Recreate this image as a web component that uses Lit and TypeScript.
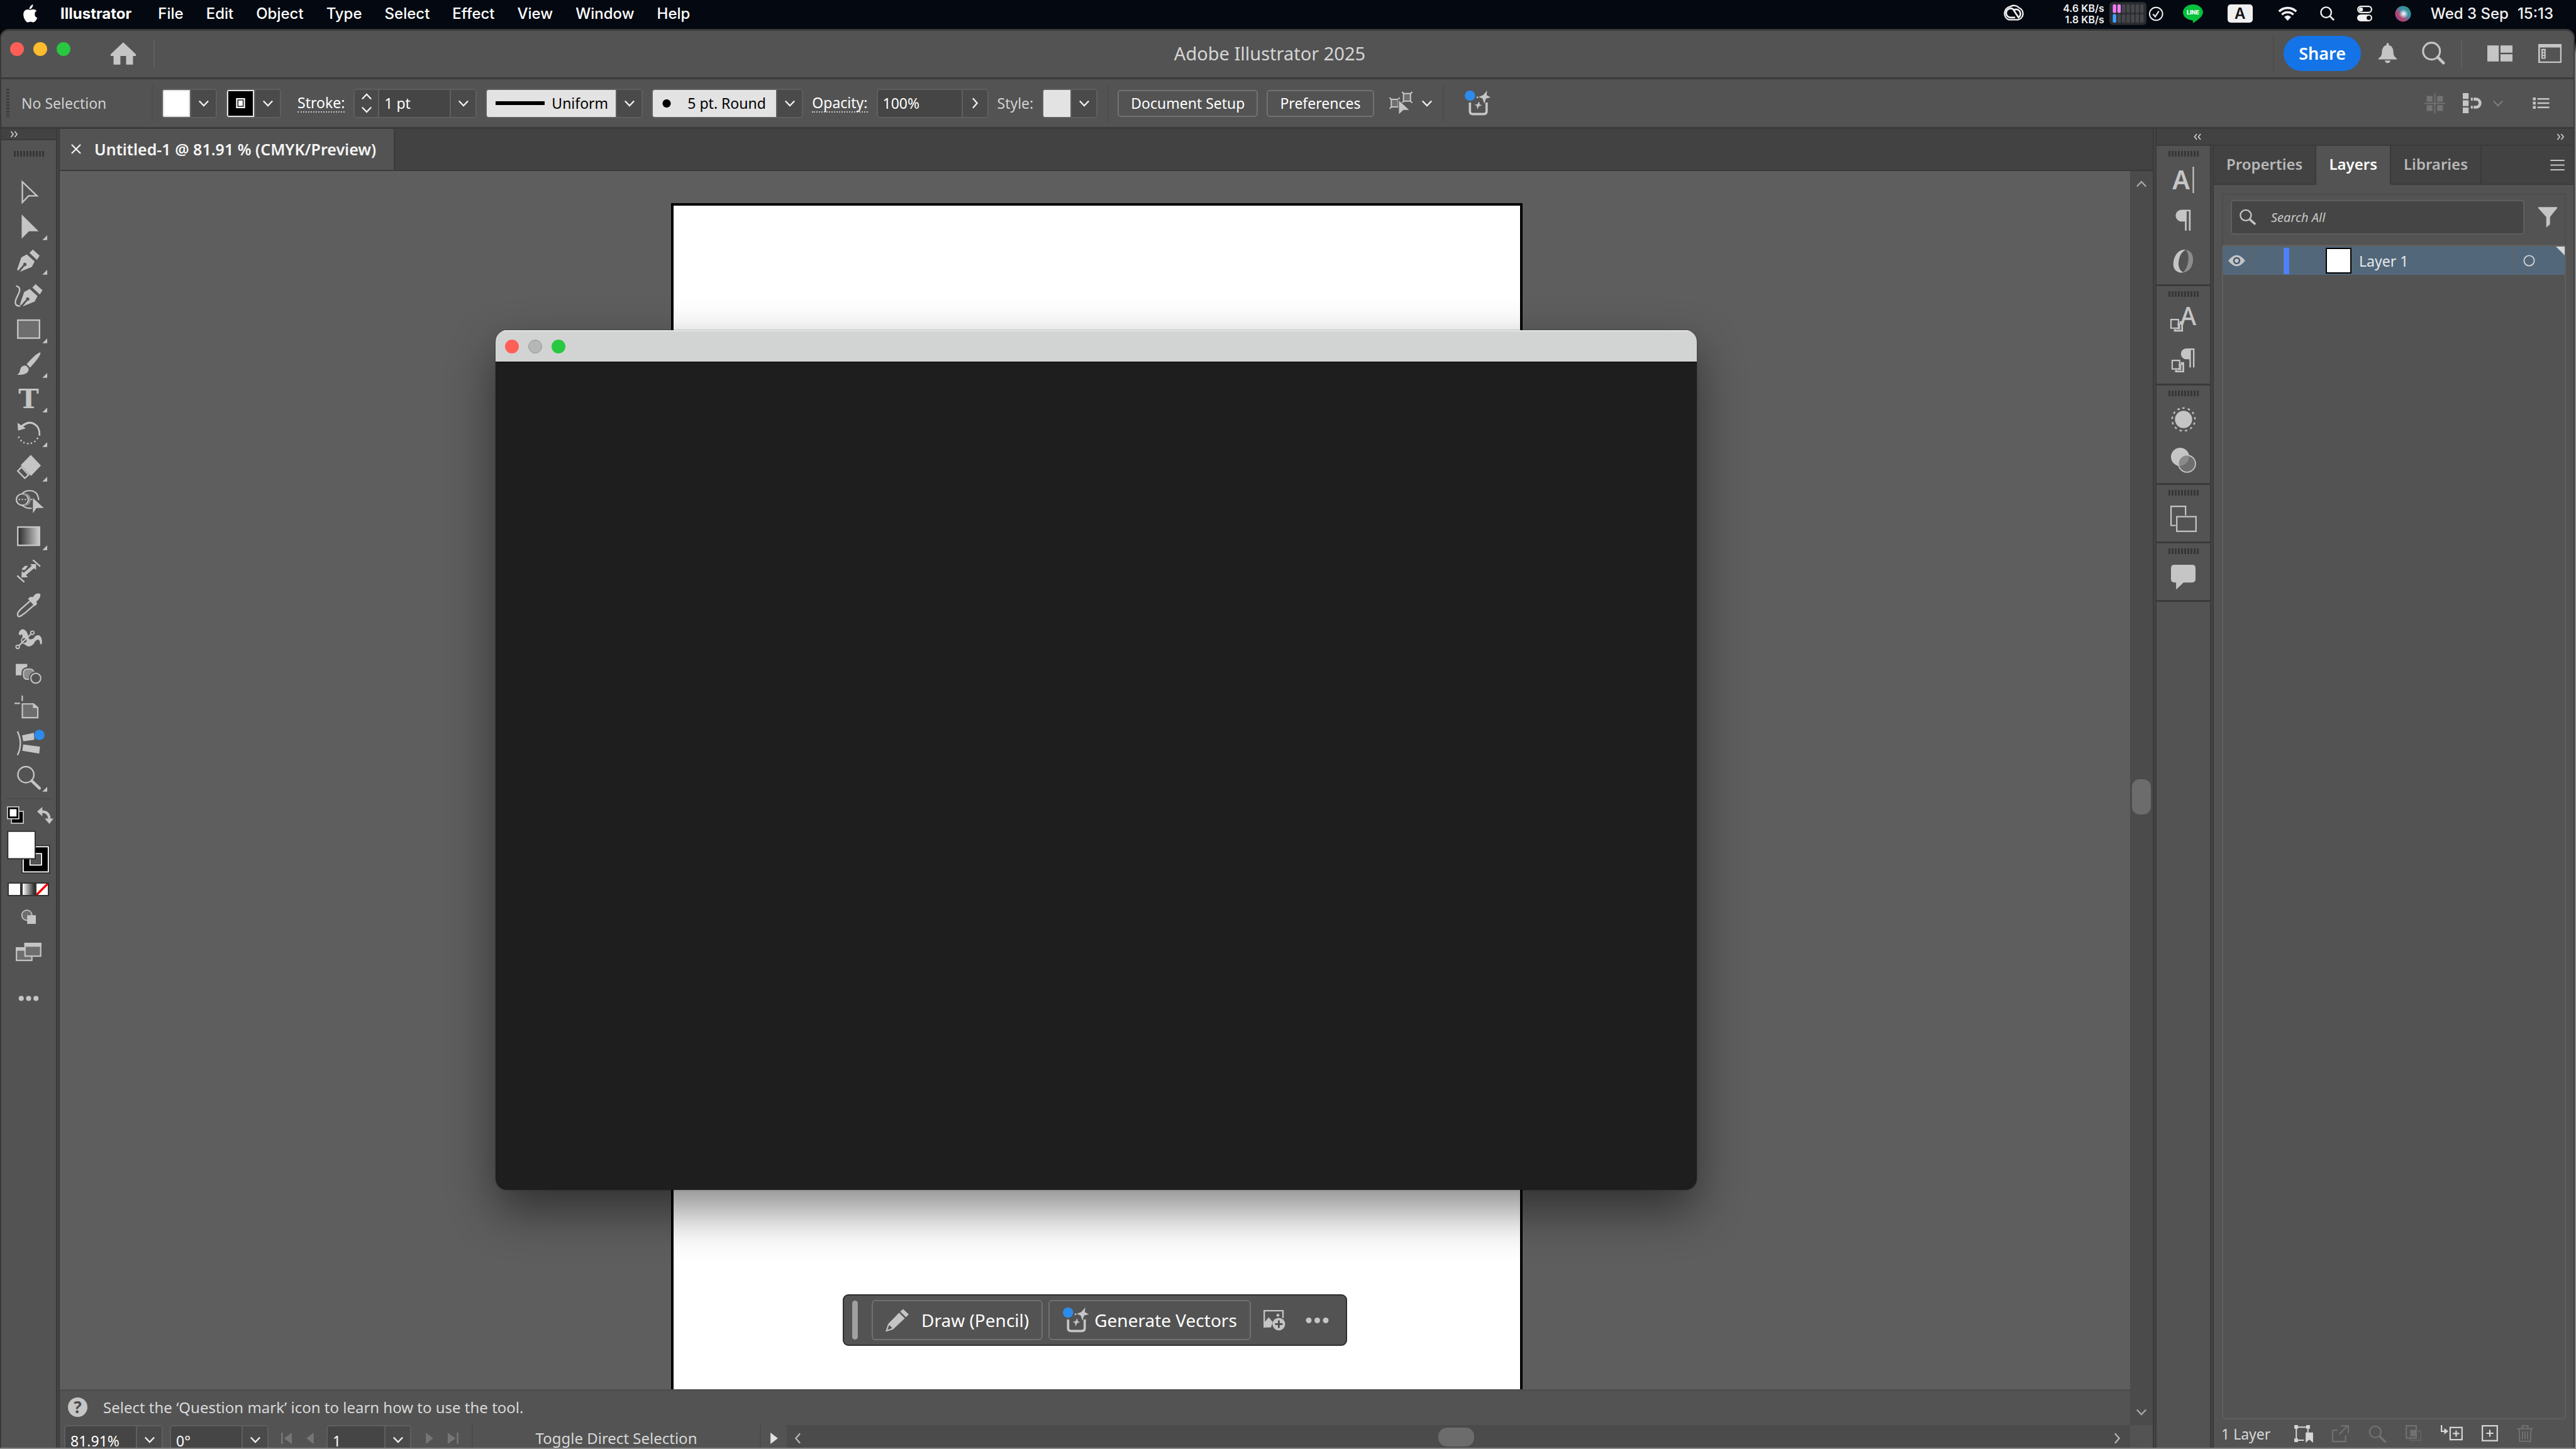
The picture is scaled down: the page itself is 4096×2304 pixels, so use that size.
import { LitElement, html, svg, css, TemplateResult, SVGTemplateResult } from "lit";
import { customElement, state } from "lit/decorators.js";
import { classMap } from "lit/directives/class-map.js";

/* Icons are drawn on a 35-unit grid that maps to 32 CSS pixels. */
const art = (x: number, y: number, w: number, h: number, body: SVGTemplateResult): TemplateResult => html`
  <svg class="art" viewBox="${x} ${y} ${w} ${h}" width=${Math.round((w * 32) / 35)} height=${Math.round((h * 32) / 35)} aria-hidden="true">${body}</svg>`;

const down = (color = "#f0f0f0") => art(0, 0, 20, 14, svg`<path d="M2 2.500 10 11 18 2.500" fill="none" stroke=${color} stroke-width="2.600"/>`);
const up = (color = "#f0f0f0") => art(0, 0, 20, 14, svg`<path d="M2 11.500 10 3 18 11.500" fill="none" stroke=${color} stroke-width="2.600"/>`);
const right = (color = "#f0f0f0") => art(0, 0, 12, 20, svg`<path d="M2 1.500 9.500 10 2 18.500" fill="none" stroke=${color} stroke-width="2.600"/>`);
const left = (color = "#f0f0f0") => art(0, 0, 12, 20, svg`<path d="M10 1.500 2.500 10 10 18.500" fill="none" stroke=${color} stroke-width="2.600"/>`);
const twinRight = art(0, 0, 14, 12, svg`<path d="M1.500 1 5.500 6 1.500 11M8 1 12 6 8 11" fill="none" stroke="#d0d0d0" stroke-width="1.800"/>`);
const twinLeft = art(0, 0, 14, 12, svg`<path d="M5.500 1 1.500 6 5.500 11M12 1 8 6 12 11" fill="none" stroke="#d0d0d0" stroke-width="1.800"/>`);

const nib = svg`
  <path d="M31.700 3.800 43.700 14.600 39 22.200 26 10z"/>
  <path d="M4.300 39 11.700 17.600 21.300 12.500 35 24.800 30 34.500 9 43 17 33a3 3 0 1 0-2-2L6 41z"/>`;

const generate = art(0, 0, 50, 46, svg`
  <path d="M10 22v15q0 5 5 5h19q5 0 5-5V22" fill="none" stroke="#c5c5c5" stroke-width="4"/>
  <path d="M40 1 39 9 46 13 38 15 35 24 32 15 25 12 33 9z" fill="#c5c5c5"/>
  <path d="M26 20 27 25 31 27 26 28 23 34 22 28 18 26 23 25z" fill="#c5c5c5"/>
  <circle cx="23" cy="13" r="1.600" fill="#c5c5c5"/>
  <circle cx="10" cy="10" r="9" fill="#2d8ceb"/>`);

interface Tool { name: string; more: boolean; body: SVGTemplateResult; }

const tools: Tool[] = [
  { name: "Selection", more: false, body: svg`<path d="M13.500 6.500 39 31H24.500L13.500 42.500z" fill="none" stroke="#c5c5c5" stroke-width="2.600"/>` },
  { name: "Direct Selection", more: true, body: svg`<path d="M12.300 3 42 32.500H25L12.300 45.400z"/>` },
  { name: "Pen", more: true, body: nib },
  { name: "Curvature", more: false, body: svg`<g transform="translate(5 0)">${nib}</g><path d="M2.500 7C14 10 7 20 3 29-1 38 2 43 10 42" fill="none" stroke="#c5c5c5" stroke-width="2.600"/>` },
  { name: "Rectangle", more: true, body: svg`<rect x="5.500" y="7.500" width="38" height="31.500" fill="#6e6e6e" stroke="#c5c5c5" stroke-width="2.600"/>` },
  { name: "Paintbrush", more: true, body: svg`<path d="M43 4q3-1 2 2Q42 14 27 30L21 24Q36 7 43 4z"/><path d="M19 26.500q6 3 5.500 8Q22 44 4.300 42.500 9 40 9.500 34q2-8 9.500-7.500z"/>` },
  { name: "Type", more: true, body: svg`<text x="24.500" y="41" text-anchor="middle" font-family="DejaVu Serif, serif" font-size="48" font-weight="700">T</text>` },
  { name: "Rotate", more: true, body: svg`<path d="M5 5.600 6 19.400 19.500 15.300 15 12.500Q25 4 34 9.500 43 15 42 28h3Q46 12 35 6 24 0 11.500 10z"/>${[[7.300, 31], [11.300, 36.800], [16.300, 40.300], [23, 42], [29.300, 41.300], [35.300, 38.300], [40, 33]].map(([x, y]) => svg`<circle cx=${x} cy=${y} r="1.500"/>`)}` },
  { name: "Eraser", more: true, body: svg`<path d="M28.300 1.300 46 20 28.700 38 10.700 19z"/><path d="M5.500 29.500 12 22.500 24.500 36 17.700 42z" fill="none" stroke="#c5c5c5" stroke-width="2.600"/>` },
  { name: "Shape Builder", more: false, body: svg`<path d="M13 10Q18 4 27 4.500 41 5 42 21M13 30Q20 36 30 35" fill="none" stroke="#c5c5c5" stroke-width="2.400"/><ellipse cx="13.500" cy="20" rx="10.500" ry="10" fill="none" stroke="#c5c5c5" stroke-width="2.400"/><path d="M17 10a10 10 0 0 1 0 20" fill="none" stroke="#8c8c8c" stroke-width="3"/><path d="M7 20H31" stroke="#c5c5c5" stroke-width="2.200" stroke-dasharray="2.500 2.800"/><path d="M32 17 51 34.800H38.300L32 44z"/>` },
  { name: "Gradient", more: true, body: svg`<defs><linearGradient id="ramp"><stop offset="0" stop-color="#2a2a2a"/><stop offset="1" stop-color="#cfcfcf"/></linearGradient></defs><rect x="5.500" y="7.500" width="38" height="32" fill="url(#ramp)" stroke="#c5c5c5" stroke-width="2.600"/>` },
  { name: "Dimension", more: false, body: svg`<path d="M4.500 32 17 43.500M32 4.500 44.700 16" stroke="#c5c5c5" stroke-width="2.600"/><path d="M12 35 12.500 24 16 27 30 15 27 12H37.500V22L34 19 20 31 23 35z"/><path d="M13 20 18 15h5.500L18 22h-5z"/>` },
  { name: "Eyedropper", more: false, body: svg`<path d="M23.300 12 28 8.300 31 9.500 37 3.500Q42 1.500 45 4 46 8 43 12L38 17 39.300 21 35 25z"/><path d="M27 16 11 30Q9 32 6 36 4 41 7 43 11 43 13.500 40L18 37 34 23" fill="none" stroke="#c5c5c5" stroke-width="2.600"/>` },
  { name: "Puppet Warp", more: false, body: svg`<path d="M7 14Q9 5 16 6 23 9 24 20 25 26 33 22 37 15 43 16.500 49 20 47.500 32H44.500Q45 25 41 24 37 24 33 32 25 40 17 32 11 24 14 18 12 12 10 17z"/><path d="M6 36 30 13" stroke="#c5c5c5" stroke-width="2.400"/><circle cx="17" cy="25.500" r="5" fill="#535353" stroke="#c5c5c5" stroke-width="2"/><path d="M12 30 24 19" stroke="#c5c5c5" stroke-width="2.400"/><circle cx="5.300" cy="36.700" r="3" fill="#535353" stroke="#c5c5c5" stroke-width="2"/><circle cx="31" cy="12" r="3" fill="#535353" stroke="#c5c5c5" stroke-width="2"/>` },
  { name: "Blend", more: false, body: svg`<rect x="2" y="6" width="20" height="20"/><rect x="14.500" y="14" width="20" height="20" rx="7" fill="#8c8c8c" stroke="#535353" stroke-width="5"/><rect x="15.500" y="15" width="18" height="18" rx="6" fill="#8c8c8c" stroke="#c5c5c5" stroke-width="2"/><circle cx="37" cy="31" r="9" fill="#535353" stroke="#535353" stroke-width="6"/><circle cx="37" cy="31" r="8.700" fill="#535353" stroke="#c5c5c5" stroke-width="2.200"/>` },
  { name: "Artboard", more: false, body: svg`<path d="M-.3 14.600H9.300M13.300 1V10.400" stroke="#c5c5c5" stroke-width="2.400"/><path d="M13.500 15.500H33L40.500 22V39.500H13.500z" fill="#6e6e6e" stroke="#c5c5c5" stroke-width="2.400"/><path d="M32 14V22.500H41z"/>` },
  { name: "Objects on Path", more: false, body: svg`<path d="M5 3Q15 24 5 44.500" fill="none" stroke="#c5c5c5" stroke-width="2.600"/><path d="M13 10 33.500 5.700 34.500 17.700 15 20.300zM15 26 44.300 29.800 43 41.800 13.300 37z"/><circle cx="43.300" cy="9.300" r="9" fill="#2d8ceb"/>` },
  { name: "Zoom", more: true, body: svg`<circle cx="19.700" cy="18.200" r="14" fill="none" stroke="#c5c5c5" stroke-width="2.600"/><path d="M30 29 43.500 42" stroke="#c5c5c5" stroke-width="5" stroke-linecap="round"/>` },
];

const pilcrow = svg`<path d="M12 0H28V37H25V3H21V37H18V21H12A10.500 10.500 0 0 1 12 0z"/>`;
const linkedSquares = svg`<path d="M1 1H14V16H1z" fill="none" stroke="#c5c5c5" stroke-width="2.400"/><path d="M16 4H22V22H6V18H10V19H19V9H16z"/><path d="M12 9h4v8h-5" fill="none" stroke="#c5c5c5" stroke-width="2"/>`;

interface DockItem { name: string; icon: TemplateResult; }
const dock: DockItem[][] = [
  [
    { name: "Character", icon: art(0, 0, 40, 46, svg`<text x="1" y="39" font-family="Noto Sans, sans-serif" font-size="45" font-weight="600">A</text><path d="M37.500 0V46" stroke="#c5c5c5" stroke-width="2.400"/>`) },
    { name: "Paragraph", icon: art(0, 0, 30, 38, pilcrow) },
    { name: "OpenType", icon: art(0, 0, 36, 40, svg`<path d="M22 0Q8-1 2 16-3 36 12 39.500 16 40 18 39.500 8 34 10 20 12 5 22 0z"/><path d="M22 0Q36 2 35 20 32 38 17 39.500 25 33 27 18 28 5 22 0z" fill="#8c8c8c"/>`) },
  ],
  [
    { name: "Character Styles", icon: art(0, 0, 46, 44, svg`<text x="17" y="31" font-family="Noto Sans, sans-serif" font-size="43" font-weight="500">A</text><g transform="translate(0 20)"><rect x="-2" y="-2" width="20" height="20" fill="#535353"/>${linkedSquares}</g>`) },
    { name: "Paragraph Styles", icon: art(0, 0, 42, 44, svg`<g transform="translate(15 0) scale(.9)">${pilcrow}</g><g transform="translate(0 20)">${linkedSquares}</g>`) },
  ],
  [
    { name: "Appearance", icon: art(0, 0, 44, 44, svg`<circle cx="22" cy="22" r="15"/><circle cx="22" cy="22" r="20" fill="none" stroke="#c5c5c5" stroke-width="2.600" stroke-dasharray="4 5.666" transform="rotate(-96 22 22)"/>`) },
    { name: "Transparency", icon: art(0, 0, 44, 44, svg`<circle cx="16" cy="16" r="16"/><circle cx="28" cy="28" r="14.800" fill="#6e6e6e" stroke="#c5c5c5" stroke-width="2"/><path d="M31.500 14A16 16 0 0 1 14.500 31.500 14 14 0 0 1 31.500 14z" fill="#8a8a8a"/>`) },
  ],
  [{ name: "Artboards", icon: art(0, 0, 46, 46, svg`<path d="M26.500 17V1.200H1.200V34.500H9.500" fill="none" stroke="#c5c5c5" stroke-width="2.400"/><rect x="11.200" y="19.200" width="33.500" height="25.500" fill="none" stroke="#c5c5c5" stroke-width="2.400"/>`) }],
  [{ name: "Comments", icon: art(0, 0, 43, 44, svg`<path d="M6 0H37Q43 0 43 6V25Q43 31 37 31H22L9 43.500V31H6Q0 31 0 25V6Q0 0 6 0z"/>`) }],
];

@customElement("app-root")
export class AppRoot extends LitElement {
  @state() private activeTab = "Layers";

  static styles = css`
    :host {
      display: flex; flex-direction: column; height: 100vh; overflow: hidden;
      background: #03060c; color: #f2f2f2;
      font: 400 23px/28px "Noto Sans", "Open Sans", sans-serif;
    }
    * { box-sizing: border-box; }
    button, input, select { font: inherit; color: inherit; border: 0; background: none; margin: 0; padding: 0; border-radius: 0; }
    button { display: flex; align-items: center; justify-content: center; }
    select { appearance: none; }
    input { min-width: 0; }
    .art { display: block; flex: none; fill: #c5c5c5; overflow: visible; }
    .grow { flex: 1; }

    .menubar { display: flex; align-items: center; flex: none; height: 46px; padding: 0 36px 3px; color: #fff; background: #040810; font: 500 24px/28px Inter, "Liberation Sans", sans-serif; }
    .menus { display: flex; align-items: center; gap: 36px; }
    .app-name { margin-right: 6px; font-weight: 700; }
    .extras { display: flex; align-items: center; color: #f0f0f0; }
    .extras .art { fill: #f0f0f0; }
    .rates { margin: 0 8px 0 60px; text-align: right; font: 600 16px/18px Inter, sans-serif; }
    .line-app { margin: 0 39px 0 31px; }
    .input-source { width: 40px; height: 29px; margin-right: 40px; border-radius: 5px; background: #f0f0f0; color: #111; font-weight: 600; }
    .system { gap: 36px; display: flex; align-items: center; }
    .clock { display: flex; gap: 14px; margin-left: -5px; }

    .shell { display: flex; justify-content: stretch; flex: 1; min-height: 0; padding: 0 2px 2px 0; background: linear-gradient(#03060c 20px, #8a8a8a 40px); }
    .frame { display: flex; flex-direction: column; flex: 1; min-width: 0; border: 2px solid #3a3a3a; border-width: 3px 2px 0; border-radius: 14px 14px 0 0; background: #535353; overflow: hidden; }

    .titlebar { display: grid; grid-template-columns: 1fr auto 1fr; align-items: center; flex: none; height: 77px; padding-bottom: 3px; border-bottom: 3px solid #3a3a3a; color: #d6d6d6; }
    .title { margin-right: 56px; font-size: 29px; line-height: 36px; }
    .lead { display: flex; align-items: center; padding-left: 14px; }
    .lights { display: flex; gap: 15px; padding-bottom: 14px; }
    .light { width: 22px; height: 22px; border-radius: 50%; }
    .close { background: #ff5f57; }
    .min { background: #febc2e; }
    .max { background: #28c840; }
    .idle { background: #b5b7b6; border: 1px solid #979998; }
    .home { margin: 0 28px 0 64px; }
    .rule { width: 2px; height: 46px; background: #5f5f5f; }
    .rule.faint { height: 60px; background: #4d4d4d; }
    .trail { display: flex; align-items: center; justify-content: flex-end; padding-right: 19px; }
    .share { height: 56px; margin: 0 28px 0 15px; padding: 0 24px; border-radius: 28px; background: #1473e6; color: #fff; font-size: 27px; font-weight: 600; }
    .trail .rule { margin: 0 40px 0 25px; }
    .trail .rule.faint { margin: 0; }
    .seek { margin-left: 40px; }
    .panes { margin-left: 41px; }

    .control { display: flex; align-items: center; gap: 14px; flex: none; height: 79px; padding-left: 8px; border-bottom: 3px solid #3a3a3a; background: #535353; }
    .dots { width: 5px; height: 46px; background: repeating-linear-gradient(#3c3c3c 0 3px, transparent 3px 5px); }
    .selection { width: 196px; padding-left: 5px; color: #d0d0d0; }
    .combo { display: flex; height: 47px; border: 2px solid #5f5f5f; border-radius: 5px; background: #454545; overflow: hidden; }
    .combo > .cell { width: 41px; flex: none; border-left: 2px solid #5f5f5f; background: #4a4a4a; display: flex; align-items: center; justify-content: center; }
    .steps { width: 39px; flex: none; flex-direction: column; justify-content: space-around; background: #4a4a4a; border-right: 2px solid #5f5f5f; display: flex; align-items: center; }
    .steps button { height: 20px; width: 100%; }
    .chip { width: 43px; background: #fff; border: 2px solid #e3e3e3; }
    .chip.ink { background: #000; }
    .chip.style { background: #e3e3e3; }
    .combo input { width: 112px; padding-left: 8px; color: #fff; }
    .control .percent { width: 133px; }
    .combo select { background: #e3e3e3; color: #000; }
    .profile { width: 205px; padding-left: 103px; }
    .combo .profile { background: linear-gradient(#000, #000) 14px 50% / 78px 6px no-repeat #e3e3e3; }
    .brush { width: 196px; padding-left: 55px; }
    .combo .brush { background: radial-gradient(circle at 22px 50%, #000 6px, transparent 7px) #e3e3e3; }
    .label { border-bottom: 2px dotted #c5c5c5; line-height: 28px; color: #fff; }
    .label.stroke { margin-left: 12px; }
    .plain { color: #d0d0d0; }
    .outline { height: 43px; padding: 0 19px; border: 2px solid #717171; border-radius: 5px; color: #fff; }
    .tx { margin-left: 10px; gap: 14px; }
    .gen { margin-left: 18px; }
    .control .rule { margin: 0 0 0 2px; }
    .snap { display: flex; align-items: center; gap: 28px; padding-right: 38px; }
    .snap .tx { margin-left: 0; }

    .main { display: flex; flex: 1; min-height: 0; }
    .gutter { width: 6px; flex: none; border: solid #3a3a3a; border-width: 0 2px; background: #464646; }
    .strip { display: flex; align-items: center; flex: none; background: #424242; border-bottom: 2px solid #3a3a3a; }
    .grip { width: 48px; height: 9px; margin: 0 auto; flex: none; background: repeating-linear-gradient(90deg, #363636 0 3px, transparent 3px 5px); }

    .toolbox { display: flex; flex-direction: column; width: 87px; flex: none; background: #535353; }
    .toolbox .strip { height: 18px; padding-left: 14px; }
    .toolbox .grip { margin-top: 17px; margin-bottom: 29px; }
    .tools { display: grid; grid-auto-rows: 1fr; flex: none; height: 986px; }
    .toolbox hr { width: 72px; height: 2px; margin: 5px auto 0; border: 0; background: #4a4a4a; }
    .mini { display: flex; align-items: center; height: 50px; padding: 0 4px 0 9px; justify-content: space-between; }
    .modes { display: flex; height: 22px; margin: 13px 0 0 10px; }
    .mode { width: 22px; height: 22px; border: 2px solid #333; background: #fff; }
    .mode.ramp { background: linear-gradient(90deg, #fff, #333); }
    .mode.none { background: linear-gradient(to bottom right, #fff 42%, #f00 42% 58%, #fff 58%); }
    .draw { height: 66px; }
    .screen { height: 44px; }
    .more { height: 104px; }

    .work { display: flex; flex-direction: column; flex: 1; min-width: 0; }
    .tabs { display: flex; flex: none; height: 67px; background: #424242; border-bottom: 2px solid #3a3a3a; }
    .doc { display: flex; align-items: center; gap: 21px; padding: 0 28px 2px 18px; background: #535353; border-right: 2px solid #3a3a3a; font-size: 25px; font-weight: 600; color: #f5f5f5; }
    .view { display: flex; flex: 1; min-height: 0; }
    .stage { display: flex; flex-direction: column; flex: 1; min-width: 0; }
    .canvas { position: relative; flex: 1; min-height: 0; background: #5e5e5e; overflow: hidden; }
    .artboard { position: absolute; top: 51px; bottom: -4px; left: 50%; width: 1354px; margin-left: -674px; border: 4px solid #000; background: #fff; }
    .floating { position: absolute; top: 253px; left: 50%; width: 1910px; height: 1367px; margin-left: -953px; border-radius: 18px; background: #1e1e1e; overflow: hidden; }
    .shade { position: absolute; top: 253px; left: 50%; width: 1910px; height: 1367px; margin-left: -953px; border-radius: 18px; box-shadow: 0 32px 76px rgba(0, 0, 0, .48), 0 0 2px rgba(0, 0, 0, .5); }
    .floating header { display: flex; align-items: center; gap: 15px; height: 51px; padding-left: 15px; background: #d2d4d3; border-top: 2px solid #e2e3e2; border-bottom: 1px solid #000; }
    .taskbar { position: absolute; left: 50%; bottom: 69px; transform: translateX(-50%); display: flex; align-items: center; width: 802px; height: 82px; padding-left: 13px; border: 2px solid #2e2e2e; border-radius: 9px; background: #535353; }
    .handle { width: 9px; height: 62px; margin-right: 22px; border-radius: 5px; background: #a0a0a0; flex: none; }
    .act { height: 64px; padding: 0 20px; gap: 20px; border: 2px solid #717171; border-radius: 6px; color: #fff; font-size: 28px; white-space: nowrap; }
    .act.wide { margin: 0 20px 0 9px; gap: 5px; }
    .overflow { margin-left: 32px; }
    .vbar { position: relative; display: flex; flex-direction: column; align-items: center; justify-content: space-between; width: 36px; flex: none; padding: 14px 0; background: #4b4b4b; }
    .vbar .thumb { position: absolute; left: 3px; top: 48.5%; width: 30px; height: 56px; border-radius: 12px; background: #6c6c6c; }
    .hint { display: flex; align-items: center; gap: 25px; flex: none; height: 57px; padding: 0 0 3px 13px; border-top: 3px solid #4e4e4e; color: #d8d8d8; font-size: 24px; }
    .mark { width: 31px; height: 31px; border-radius: 50%; background: #c5c5c5; color: #4a4a4a; font-weight: 700; font-size: 26px; line-height: 31px; }
    .status { display: flex; align-items: flex-start; flex: none; height: 36px; overflow: hidden; padding-left: 7px; background: #535353; }
    .status .combo { flex: none; margin-right: 11px; }
    .status .page { width: 90px; }
    .status input { height: 45px; }
    .nav { display: flex; align-items: center; height: 42px; gap: 22px; padding: 0 20px 0 9px; }
    .nav.next { padding: 0 21px 0 12px; }
    .toggle { width: 460px; height: 42px; border: solid #4b4b4b; border-width: 0 2px; color: #d8d8d8; font-size: 24px; }
    .play { width: 41px; height: 42px; }
    .hbar { position: relative; display: flex; justify-content: space-between; align-items: center; flex: 1; height: 42px; padding: 0 15px 0 12px; background: #4b4b4b; }
    .hbar .thumb { position: absolute; top: 4px; left: 48.5%; width: 57px; height: 30px; border-radius: 14px; background: #6c6c6c; }
    .corner { width: 36px; height: 42px; }

    .side { display: grid; grid-template: auto 1fr / 85px 6px 572px; flex: none; }
    .side .strip { grid-column: 1 / -1; height: 27px; padding: 0 14px 0 59px; justify-content: space-between; }
    .dock { background: #535353; }
    .group { display: flex; flex-direction: column; padding: 8px 0 4px; border-bottom: 3px solid #3a3a3a; }
    .group .grip { margin-bottom: 4px; }
    .group button { height: 65px; }

    .panel { display: flex; flex-direction: column; min-height: 0; }
    .panel-tabs { display: flex; flex: none; height: 62px; background: #424242; color: #b8b8b8; font-size: 24px; font-weight: 600; }
    .tab { padding: 0 20px 3px; border: solid #3a3a3a; border-width: 0 2px 2px 0; color: #b8b8b8; }
    .tab.on { background: #535353; color: #fff; border-bottom-color: #535353; }
    .panel-tabs .grow { border-bottom: 2px solid #3a3a3a; display: flex; justify-content: flex-end; align-items: center; padding-right: 14px; }
    .search { display: flex; align-items: center; flex: none; height: 81px; margin: 14px 12px 0 13px; padding: 0 12px 8px; border: 2px solid #4c4c4c; border-bottom: 0; }
    .box { display: flex; align-items: center; gap: 23px; flex: 1; height: 55px; margin-right: 22px; padding-left: 12px; border: 2px solid #5f5f5f; border-radius: 5px; background: #454545; }
    .box input { flex: 1; align-self: stretch; font-size: 20px; font-style: italic; }
    .box input::placeholder { color: #c8c8c8; opacity: 1; }
    .list { flex: 1; margin: 0 12px 0 13px; border: 2px solid #5f5f5f; border-top-width: 3px; border-radius: 5px; list-style: none; padding: 0; }
    .row { position: relative; display: flex; align-items: center; height: 45px; background: #52677a; color: #e6e9ec; }
    .eye { width: 45px; height: 45px; border-right: 2px solid #5f6468; }
    .lock { width: 51px; height: 45px; border-right: 2px solid #5f6468; }
    .hue { width: 9px; height: 42px; margin-right: 58px; background: #4f80ff; }
    .thumbnail { width: 41px; height: 41px; margin-right: 12px; border: 2px solid #000; background: #fff; }
    .target { width: 82px; height: 45px; padding-right: 34px; border-left: 2px solid #5f6468; }
    .fold { position: absolute; top: 0; right: 0; }
    .foot { display: flex; align-items: flex-start; justify-content: space-between; flex: none; height: 45px; padding: 9px 64px 0 12px; color: #d8d8d8; overflow: hidden; }
    .foot span { padding-right: 8px; }
  `;

  private menubar() {
    return html`
      <nav class="menubar" aria-label="Menu bar">
        <div class="menus">
          ${art(0, 0, 26, 32, svg`<path d="M18 0Q18 4 16 6 14 8.500 11.500 8.500 11.500 5 13.500 3 15.500 .8 18 0zM24.500 11Q21 13 21 17 21 22 25.500 23.500 24.500 26.500 22 29.500 20 31.500 18 31.500 16.500 31 14 30.300 12 30.500 9.500 31.500 7 32 4.500 28.500 1 23.500 1 18 1 9.500 8.500 8.800 10.500 9 13 10 15 9 18 8.500 22 8.700 24.500 11z" fill="#fff"/>`)}
          <span class="app-name">Illustrator</span>
          ${["File", "Edit", "Object", "Type", "Select", "Effect", "View", "Window", "Help"].map((m) => html`<span>${m}</span>`)}
        </div>
        <div class="grow"></div>
        <div class="extras">
          ${art(0, 0, 40, 30, svg`<path d="M14 3A12 12 0 0 0 12 26H28A11 11 0 0 0 30 5 12 12 0 0 0 14 3z" fill="none" stroke="#f0f0f0" stroke-width="2.600"/><path d="M23 22H15A8 8 0 1 1 19 7L29 22A8 8 0 0 0 27 8Q24 7 21 9" fill="none" stroke="#f0f0f0" stroke-width="3"/>`)}
          <div class="rates">4.6 KB/s<br>1.8 KB/s</div>
          ${art(0, 0, 65, 40, svg`<rect width="65" height="40" rx="6" fill="#2b2d31"/>${[0, 1, 2, 3, 4, 5, 6].map((i) => svg`<rect x=${6 + i * 8} y="4" width="6" height="15" rx="2" fill=${i < 2 ? "#f07cf5" : "#45474b"}/><rect x=${6 + i * 8} y="21" width="6" height="15" rx="2" fill=${i < 1 ? "#3fa2ff" : "#45474b"}/>`)}`)}
          ${art(-4, 0, 30, 26, svg`<circle cx="13" cy="13" r="11.500" fill="none" stroke="#f0f0f0" stroke-width="2.200"/><path d="M7.500 13.500 11.500 18 18 8" fill="none" stroke="#f0f0f0" stroke-width="2.400"/>`)}
          <span class="line-app">${art(0, 0, 35, 33, svg`<path d="M17.500 0C27 0 35 6 35 14 35 20 28 26 17 33 18 30 17.500 28 16 27.800 7 27 0 21.500 0 14 0 6 8 0 17.500 0z" fill="#06c13c"/><text x="17.500" y="18" text-anchor="middle" font-family="Inter, sans-serif" font-size="10" font-weight="800" fill="#fff">LINE</text>`)}</span>
          <button class="input-source" aria-label="Input source">A</button>
          <div class="system">
            ${art(0, 0, 34, 25, svg`<path d="M2 9A21 21 0 0 1 32 9M7 14.500A14 14 0 0 1 27 14.500" fill="none" stroke="#f0f0f0" stroke-width="4"/><path d="M17 25 11 18.500Q17 13 23 18.500z"/>`)}
            ${art(0, 0, 25, 25, svg`<circle cx="10.500" cy="10.500" r="9" fill="none" stroke="#f0f0f0" stroke-width="2.600"/><path d="M17 17 24 24" stroke="#f0f0f0" stroke-width="3"/>`)}
            ${art(0, 0, 26, 27, svg`<rect x="1.200" y="1.200" width="23.600" height="10.600" rx="5.300" fill="none" stroke="#f0f0f0" stroke-width="2.400"/><circle cx="6.500" cy="6.500" r="3.500"/><rect y="15" width="26" height="12" rx="6"/><circle cx="20" cy="21" r="3.600" fill="#05070b"/>`)}
            ${art(0, 0, 28, 28, svg`<defs><linearGradient id="siri" x1="0" y1="1" x2="1" y2="0"><stop offset="0" stop-color="#4a50c8"/><stop offset=".3" stop-color="#c0406a"/><stop offset=".6" stop-color="#3b8fb0"/><stop offset="1" stop-color="#2f9868"/></linearGradient><radialGradient id="glow"><stop offset="0" stop-color="#fff"/><stop offset="1" stop-color="#fff" stop-opacity="0"/></radialGradient></defs><circle cx="14" cy="14" r="13.500" fill="url(#siri)"/><circle cx="15" cy="14" r="8" fill="url(#glow)"/>`)}
            <div class="clock"><span>Wed 3 Sep</span><span>15:13</span></div>
          </div>
        </div>
      </nav>`;
  }

  private titlebar() {
    return html`
      <header class="titlebar">
        <div class="lead">
          <div class="lights"><button class="light close" aria-label="Close"></button><button class="light min" aria-label="Minimize"></button><button class="light max" aria-label="Zoom"></button></div>
          <button class="home" aria-label="Home">${art(0, 0, 44, 39, svg`<path d="M22 0 44 21V24H39V39H27V24H17V39H5V24H0V21z"/>`)}</button>
          <span class="rule"></span>
        </div>
        <div class="title">Adobe Illustrator 2025</div>
        <div class="trail">
          <span class="rule faint"></span>
          <button class="share">Share</button>
          <button aria-label="Notifications">${art(0, 0, 32, 36, svg`<path d="M14 2Q14 0 16 0T18 2V4Q26 6 26 16 26 24 32 27V29H0V27Q6 24 6 16 6 6 14 4zM11 31H21Q20 35.500 16 35.500T11 31z"/>`)}</button>
          <button class="seek" aria-label="Search">${art(0, 0, 40, 40, svg`<circle cx="16.500" cy="16.500" r="14.500" fill="none" stroke="#c5c5c5" stroke-width="3.400"/><path d="M27 27 37 37" stroke="#c5c5c5" stroke-width="5" stroke-linecap="round"/>`)}</button>
          <span class="rule"></span>
          <button aria-label="Arrange documents">${art(0, 0, 44, 28, svg`<path d="M0 0H20V28H0zM23 0H44V12.500H23zM23 15.500H44V28H23z"/>`)}</button>
          <button class="panes" aria-label="Workspace">${art(0, 0, 41, 33, svg`<path d="M0 0H41V33H0zM3 6V30.500H38.500V6z" fill-rule="evenodd"/><path d="M5.500 8.500H13V26H5.500zM8 11v3h2.500v-3zM8 16v3h2.500v-3zM8 21v3h2.500v-3z" fill-rule="evenodd"/>`)}</button>
        </div>
      </header>`;
  }

  private control() {
    return html`
      <div class="control">
        <span class="dots"></span>
        <span class="selection">No Selection</span>
        <span class="rule faint"></span>
        <div class="combo"><button class="chip" aria-label="Fill"></button><button class="cell" aria-label="Fill swatches">${down()}</button></div>
        <div class="combo"><button class="chip ink" aria-label="Stroke">${art(0, 0, 16, 18, svg`<path d="M0 0H16V18H0zM2.500 2.500V15.500H13.500V2.500z" fill="#fff" fill-rule="evenodd"/><rect x="4" y="4" width="8" height="10" fill="#fff"/>`)}</button><button class="cell" aria-label="Stroke swatches">${down()}</button></div>
        <label class="label stroke" for="weight">Stroke:</label>
        <div class="combo">
          <span class="steps"><button aria-label="Increase">${up()}</button><button aria-label="Decrease">${down()}</button></span>
          <input id="weight" value="1 pt"><button class="cell" aria-label="Stroke weights">${down()}</button>
        </div>
        <div class="combo"><select class="profile" aria-label="Width profile"><option>Uniform</option></select><span class="cell">${down()}</span></div>
        <div class="combo"><select class="brush" aria-label="Brush definition"><option>5 pt. Round</option></select><span class="cell">${down()}</span></div>
        <label class="label" for="opacity">Opacity:</label>
        <div class="combo"><input id="opacity" class="percent" value="100%"><button class="cell" aria-label="Opacity slider">${right()}</button></div>
        <span class="plain">Style:</span>
        <div class="combo"><button class="chip style" aria-label="Graphic style"></button><button class="cell" aria-label="Graphic styles">${down()}</button></div>
        <span class="rule faint"></span>
        <button class="outline">Document Setup</button>
        <button class="outline">Preferences</button>
        <button class="tx" aria-label="Select similar objects">${art(0, 0, 40, 39, svg`
          <rect x="24.500" y="3" width="12" height="13" fill="#6e6e6e" stroke="#c5c5c5" stroke-width="2.200"/><path d="M22 0 25 3.500M39.500 0 36.500 3.500M22 19 25 16M39.500 19 36.500 16" stroke="#c5c5c5" stroke-width="2.200"/>
          <rect x="3.500" y="13" width="12" height="13" fill="#6e6e6e" stroke="#c5c5c5" stroke-width="2.200"/><path d="M.5 10 4 13.500M18 10 15 13.500M.5 29 4 26" stroke="#c5c5c5" stroke-width="2.200"/>
          <path d="M16 13.500 36 32H24.500L16 40z" stroke="#535353" stroke-width="1.500"/>`)}${down()}</button>
        <span class="rule faint"></span>
        <button class="gen" aria-label="Generate vectors">${generate}</button>
        <div class="grow"></div>
        <div class="snap">
          <button aria-label="Align to pixel grid">${art(0, 0, 36, 36, svg`<path d="M4 5H14V15H4zM22 5H32V15H22zM4 21H14V31H4zM22 21H32V31H22zM17 0H19V36H17zM0 17H36V19H0z" fill="#737373"/>`)}</button>
          <button class="tx" aria-label="Snap options">${art(0, 0, 36, 36, svg`<path d="M0 0H10V10H0zM0 12.500H10V22.500H0zM0 25H10V35H0z"/><path d="M14 10.500H23A7 7 0 0 1 23 24.500H14" fill="none" stroke="#c5c5c5" stroke-width="5"/><path d="M18 7V28" stroke="#535353" stroke-width="1.500"/>`)}${down("#7a7a7a")}</button>
          <button class="gen" aria-label="Control menu">${art(0, 0, 29, 20, svg`<path d="M0 0H5V5H0zM0 7.500H5V12.500H0zM0 15H5V20H0zM8 1H29V4H8zM8 8.500H29V11.500H8zM8 16H29V19H8z"/>`)}</button>
        </div>
      </div>`;
  }

  private toolbox() {
    return html`
      <aside class="toolbox" aria-label="Tools">
        <div class="strip">${twinRight}</div>
        <span class="grip"></span>
        <div class="tools">
          ${tools.map((t) => html`<button aria-label=${t.name}>${art(-8, 0, 66, 48, svg`${t.body}${t.more ? svg`<path d="M48.500 48 57 39.500V48z"/>` : ""}`)}</button>`)}
        </div>
        <hr>
        <div class="mini">
          <button aria-label="Default fill and stroke">${art(12, 1400, 30, 31, svg`<path d="M19 1408H42V1431H19z"/><path d="M21 1410H40V1429H21z" fill="#000"/><path d="M27 1416H34V1423H27z" fill="#999"/><path d="M12 1400H34V1423H12z"/><path d="M14 1402H32V1421H14z" fill="#000"/><path d="M17 1405H29V1418H17z" fill="#fff"/>`)}</button>
          <button aria-label="Swap fill and stroke">${art(64, 1402, 28, 29, svg`<path d="M72 1410Q84 1410 85 1422" fill="none" stroke="#c5c5c5" stroke-width="4.500"/><path d="M64 1410 73 1402V1418zM77 1422H92L85 1431z"/>`)}</button>
        </div>
        <button aria-label="Fill and stroke">${art(2, 1445, 95, 76, svg`
          <path d="M37 1470H87V1520H37z" fill="#2e2e2e"/><path d="M39 1472H85V1518H39z" fill="#fff"/><path d="M41 1474H83V1516H41z" fill="#000"/><path d="M51 1484H73V1506H51z" fill="#fff"/><path d="M53 1486H71V1504H53z" fill="#2e2e2e"/><path d="M54 1487H70V1503H54z" fill="#535353"/>
          <path d="M12 1445H62V1495H12z" fill="#2e2e2e"/><path d="M14 1447H60V1493H14z" fill="#fff"/>`)}</button>
        <div class="modes"><button class="mode" aria-label="Color"></button><button class="mode ramp" aria-label="Gradient"></button><button class="mode none" aria-label="None"></button></div>
        <button class="draw" aria-label="Drawing mode">${art(0, 0, 25, 26, svg`<circle cx="9.500" cy="10" r="8.800" fill="#6e6e6e" stroke="#c5c5c5" stroke-width="1.800"/><rect x="10" y="10" width="15" height="15"/>`)}</button>
        <button class="screen" aria-label="Screen mode">${art(0, 0, 45, 32, svg`<rect x="1.200" y="9" width="27" height="22" fill="#6e6e6e" stroke="#c5c5c5" stroke-width="2.400"/><path d="M0 8H30V14H0z"/><rect x="16.200" y="1.500" width="27.500" height="22" fill="#6e6e6e" stroke="#c5c5c5" stroke-width="2.400"/><path d="M15 0H45V7H15z"/>`)}</button>
        <button class="more" aria-label="Edit toolbar">${art(0, 0, 36, 10, svg`<circle cx="5" cy="5" r="4.500"/><circle cx="18" cy="5" r="4.500"/><circle cx="31" cy="5" r="4.500"/>`)}</button>
      </aside>`;
  }

  private canvas() {
    return html`
      <div class="canvas">
        <div class="artboard"></div>
        <div class="shade"></div>
        <section class="floating" aria-label="Dialog">
          <header><button class="light close" aria-label="Close"></button><button class="light idle" aria-label="Minimize"></button><button class="light max" aria-label="Zoom"></button></header>
        </section>
        <div class="taskbar">
          <span class="handle"></span>
          <button class="act">${art(0, 0, 41, 40, svg`<path d="M31 0 41 9.500 36 14.500 26 4.500z"/><path d="M24 6.500 34 16.500 13 36 0 40 4.500 26.500zM6.500 28 3.500 36.500 12 33.500z" fill-rule="evenodd"/>`)}Draw (Pencil)</button>
          <button class="act wide">${generate}Generate Vectors</button>
          <button aria-label="Add image">${art(0, 0, 38, 36, svg`<path d="M0 0H35V14H32.500V2.500H2.500V30H12V30.500H0z"/><path d="M2 30V21L9 12.500 16 21 13 30z"/><circle cx="25" cy="9" r="2.500"/><circle cx="26.500" cy="24.500" r="11"/><path d="M26.500 18V31M20 24.500H33" stroke="#4a4a4a" stroke-width="3"/>`)}</button>
          <button class="overflow" aria-label="More options">${art(0, 0, 40, 10, svg`<circle cx="5" cy="5" r="5"/><circle cx="20" cy="5" r="5"/><circle cx="35" cy="5" r="5"/>`)}</button>
        </div>
      </div>`;
  }

  private status() {
    return html`
      <footer class="status">
        <div class="combo"><input aria-label="Zoom level" value="81.91%"><button class="cell" aria-label="Zoom presets">${down()}</button></div>
        <div class="combo"><input aria-label="Rotation" value="0°"><button class="cell" aria-label="Rotation presets">${down()}</button></div>
        <div class="nav">
          <button aria-label="First artboard">${art(0, 0, 20, 20, svg`<path d="M0 0H3V20H0zM19 0V20L5 10z" fill="#757575"/>`)}</button>
          <button aria-label="Previous artboard">${art(0, 0, 13, 20, svg`<path d="M13 0V20L0 10z" fill="#757575"/>`)}</button>
        </div>
        <div class="combo"><input class="page" aria-label="Artboard number" value="1"><button class="cell" aria-label="Artboards">${down()}</button></div>
        <div class="nav next">
          <button aria-label="Next artboard">${art(0, 0, 13, 20, svg`<path d="M0 0V20L13 10z" fill="#757575"/>`)}</button>
          <button aria-label="Last artboard">${art(0, 0, 20, 20, svg`<path d="M17 0H20V20H17zM1 0V20L15 10z" fill="#757575"/>`)}</button>
        </div>
        <button class="toggle">Toggle Direct Selection</button>
        <button class="play" aria-label="Status menu">${art(0, 0, 13, 20, svg`<path d="M0 0V20L13 10z" fill="#e0e0e0"/>`)}</button>
        <div class="hbar">${left("#b5b5b5")}<span class="thumb"></span>${right("#b5b5b5")}</div>
        <span class="corner"></span>
      </footer>`;
  }

  private layers() {
    const dim = "#717171";
    return html`
      <section class="panel">
        <div class="panel-tabs">
          ${["Properties", "Layers", "Libraries"].map((t) => html`<button class=${classMap({ tab: true, on: t === this.activeTab })} @click=${() => (this.activeTab = t)}>${t}</button>`)}
          <div class="grow"><button aria-label="Panel menu">${art(0, 0, 25, 19, svg`<path d="M0 0H25V2.200H0zM0 8.500H25V10.700H0zM0 16.800H25V19H0z"/>`)}</button></div>
        </div>
        <div class="search">
          <label class="box">${art(0, 0, 30, 29, svg`<circle cx="11" cy="11" r="9.500" fill="none" stroke="#c5c5c5" stroke-width="2.600"/><path d="M18.500 18.500 28 27" stroke="#c5c5c5" stroke-width="4"/>`)}<input placeholder="Search All" aria-label="Search All"></label>
          <button aria-label="Filter">${art(0, 0, 33, 36, svg`<path d="M0 0H33V2L20.500 17.500V30.500L14 36V17.500L0 2z"/>`)}</button>
        </div>
        <ul class="list">
          <li class="row">
            <button class="eye" aria-label="Visibility">${art(0, 0, 30, 19, svg`<path d="M0 9.500Q15-10 30 9.500 15 29 0 9.500z"/><circle cx="15" cy="9.500" r="6.500" fill="#42566a"/><circle cx="15" cy="9.500" r="3.600"/>`)}</button>
            <button class="lock" aria-label="Lock"></button>
            <span class="hue"></span><span class="thumbnail"></span><span>Layer 1</span>
            <span class="grow"></span>
            <button class="target" aria-label="Target">${art(0, 0, 21, 21, svg`<circle cx="10.500" cy="10.500" r="9" fill="none" stroke="#d0d3d6" stroke-width="2"/>`)}</button>
            <span class="fold">${art(0, 0, 15, 15, svg`<path d="M0 0H15V15z" fill="#d6d6d6"/>`)}</span>
          </li>
        </ul>
        <div class="foot">
          <span>1 Layer</span>
          <button aria-label="Collect for export">${art(0, 0, 33, 31, svg`<path d="M3.500 3.500H24V14M3.500 3.500V26.500H17" fill="none" stroke="#d6d6d6" stroke-width="2.200"/><path d="M0 0H6.500V6.500H0zM21 0H27.500V6.500H21zM0 23.500H6.500V30H0zM20 13H33V31L26.500 25.500 20 31z" fill="#d6d6d6"/>`)}</button>
          <button aria-label="Export">${art(0, 0, 30, 31, svg`<path d="M10 9H1.200V29H24V18M13 16 27 2M16 1.200H28.800V14" fill="none" stroke=${dim} stroke-width="2.400"/>`)}</button>
          <button aria-label="Locate object">${art(0, 0, 32, 31, svg`<circle cx="12" cy="12" r="10" fill="none" stroke=${dim} stroke-width="2.600"/><path d="M19.500 19.500 29 29" stroke=${dim} stroke-width="4" stroke-linecap="round"/>`)}</button>
          <button aria-label="Clipping mask">${art(0, 0, 28, 28, svg`<path d="M18 10H26V26H8V21" fill="none" stroke="#616161" stroke-width="2.400"/><rect x="1.200" y="1.200" width="17" height="21" fill="none" stroke=${dim} stroke-width="2.400"/><rect x="8" y="8" width="11" height="11" fill=${dim}/>`)}</button>
          <button aria-label="New sublayer">${art(0, 0, 38, 28, svg`<path d="M1.200 0V10.500H7" fill="none" stroke="#d6d6d6" stroke-width="2.400"/><path d="M6 5 13 10.500 6 16z" fill="#d6d6d6"/><rect x="16.200" y="4" width="20.500" height="21" fill="none" stroke="#d6d6d6" stroke-width="2.400"/><path d="M26.500 9V20M21 14.500H32" stroke="#d6d6d6" stroke-width="2.400"/>`)}</button>
          <button aria-label="New layer">${art(0, 0, 28, 28, svg`<rect x="1.200" y="1.200" width="25.500" height="25.500" fill="none" stroke="#d6d6d6" stroke-width="2.400"/><path d="M14 8V20M8 14H20" stroke="#d6d6d6" stroke-width="2.400"/>`)}</button>
          <button aria-label="Delete">${art(0, 0, 28, 30, svg`<path d="M0 6.500H28M9 6V1.500H19V6M3.500 7 4.500 28.500H23.500L24.500 7M9.500 11V25M14 11V25M18.500 11V25" fill="none" stroke=${dim} stroke-width="2.200"/>`)}</button>
        </div>
      </section>`;
  }

  render() {
    return html`
      ${this.menubar()}
      <div class="shell">
        <div class="frame">
          ${this.titlebar()} ${this.control()}
          <div class="main">
            ${this.toolbox()}
            <span class="gutter"></span>
            <div class="work">
              <div class="tabs">
                <div class="doc"><button aria-label="Close document">${art(0, 0, 17, 17, svg`<path d="M1 1 16 16M16 1 1 16" stroke="#f0f0f0" stroke-width="2.400"/>`)}</button>Untitled-1 @ 81.91 % (CMYK/Preview)</div>
              </div>
              <div class="view">
                <div class="stage">
                  ${this.canvas()}
                  <div class="hint"><button class="mark" aria-label="Help">?</button>Select the ‘Question mark’ icon to learn how to use the tool.</div>
                </div>
                <div class="vbar">${up("#a8a8a8")}<span class="thumb"></span>${down("#a8a8a8")}</div>
              </div>
              ${this.status()}
            </div>
            <span class="gutter"></span>
            <div class="side">
              <div class="strip">${twinLeft}${twinRight}</div>
              <div class="dock">
                ${dock.map((g) => html`<div class="group"><span class="grip"></span>${g.map((d) => html`<button aria-label=${d.name}>${d.icon}</button>`)}</div>`)}
              </div>
              <span class="gutter"></span>
              ${this.layers()}
            </div>
          </div>
        </div>
      </div>`;
  }
}
